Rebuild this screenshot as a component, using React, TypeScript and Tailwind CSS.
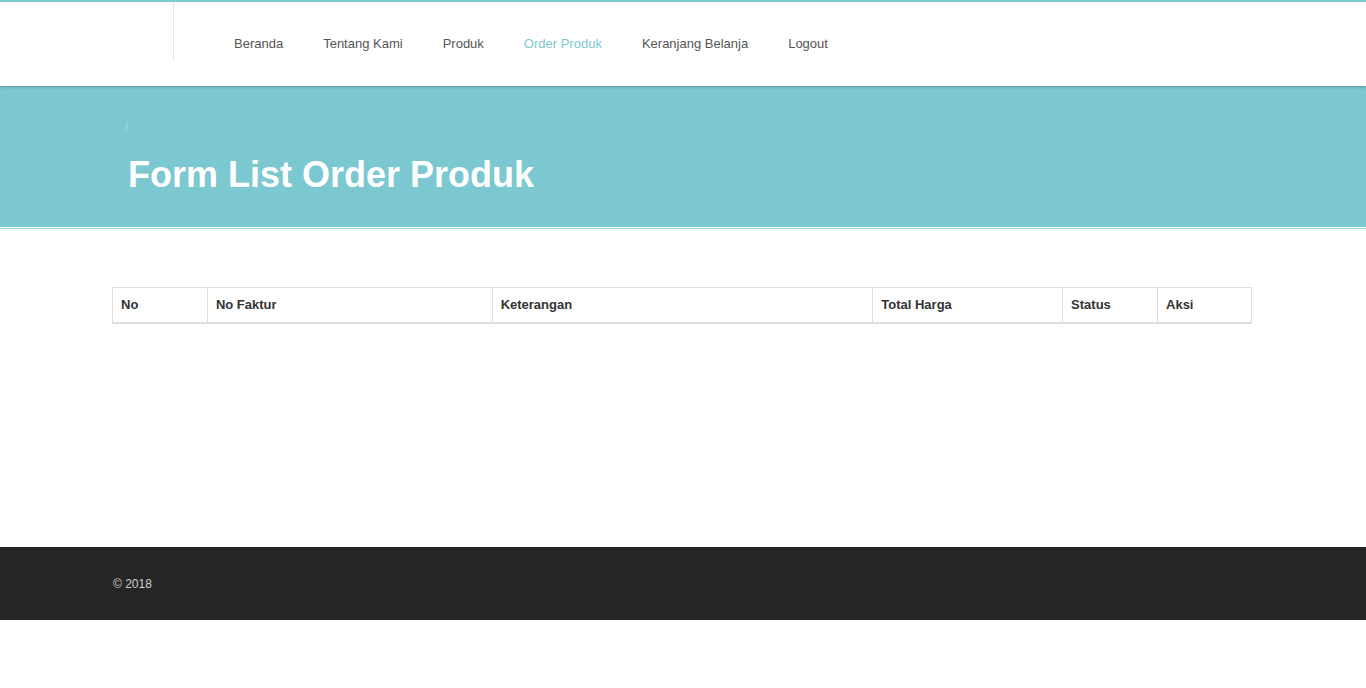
import React from "react";

const navItems = ["Beranda", "Tentang Kami", "Produk", "Order Produk", "Keranjang Belanja", "Logout"];
const cols = [
  { label: "No", w: "w-[95px]" },
  { label: "No Faktur", w: "w-[285px]" },
  { label: "Keterangan", w: "w-[381px]" },
  { label: "Total Harga", w: "w-[190px]" },
  { label: "Status", w: "w-[95px]" },
  { label: "Aksi", w: "w-[94px]" },
];

export default function App() {
  return (
    <div className="min-h-[688px] bg-white font-['Liberation_Sans',Arial,sans-serif]">
      <header className="relative z-10 h-[86px] border-t-2 border-[#7cc8d0] bg-white shadow-[0_1px_3px_rgba(0,0,0,0.25)]">
        <div className="flex h-[84px]">
          <div className="ml-[173px] h-[59px] w-px bg-[#e2e2e2]" />
          <nav className="ml-[40px] flex items-center pb-[1px]">
            {navItems.map((n) => (
              <a
                key={n}
                className={`px-[20px] text-[13px] leading-[20px] ${n === "Order Produk" ? "text-[#7cc8d0]" : "text-[#555]"}`}
              >
                {n}
              </a>
            ))}
          </nav>
        </div>
      </header>
      <section className="h-[141px] bg-[#7cc8d0] pl-[125px] pt-[32px]">
        <div className="text-[12px] leading-[16px] text-[#a9dde3]">/</div>
        <h1 className="ml-[3px] mt-[21px] text-[36px] font-bold leading-[40px] text-white">Form List Order Produk</h1>
      </section>
      <div className="h-px bg-white" />
      <div className="h-px bg-[#a6dbe0]" />
      <main className="h-[318px] pt-[58px]">
        <div className="ml-[112px] w-[1140px]">
          <table className="w-[1140px] border-collapse">
            <thead>
              <tr>
                {cols.map((c) => (
                  <th
                    key={c.label}
                    className={`${c.w} h-[35px] border border-b-2 border-[#dddddd] px-[8px] text-left text-[13px] font-bold text-[#333]`}
                  >
                    {c.label}
                  </th>
                ))}
              </tr>
            </thead>
          </table>
        </div>
      </main>
      <footer className="flex h-[73px] items-center bg-[#262626] pl-[113px]">
        <span className="text-[12px] text-[#cfcfcf]">© 2018</span>
      </footer>
    </div>
  );
}
